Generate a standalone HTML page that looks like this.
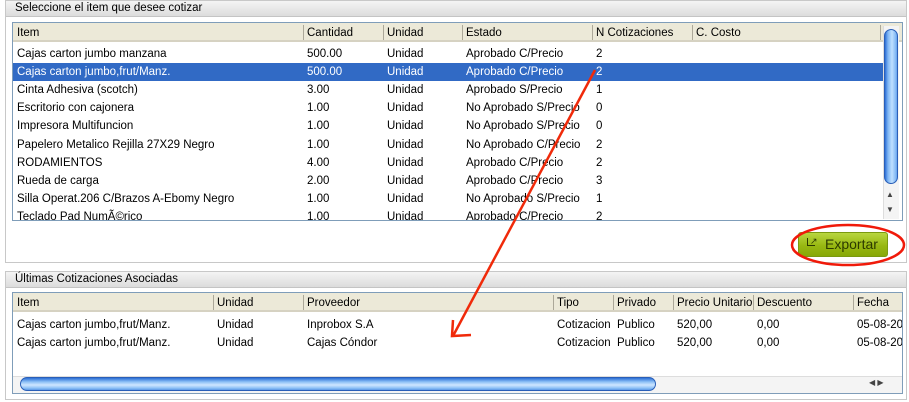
<!DOCTYPE html>
<html><head><meta charset="utf-8"><style>
*{margin:0;padding:0;box-sizing:border-box}
body{width:909px;height:402px;background:#fff;font-family:"Liberation Sans","DejaVu Sans",sans-serif;font-size:11.5px;color:#000;position:relative;overflow:hidden}
.abs{position:absolute}
.panel{position:absolute;border:1px solid #c8c8c8;background:#fff}
.ph{position:absolute;left:0;right:0;top:0;height:16px;background:linear-gradient(#f4f4f4,#dcdcdc);border-bottom:1px solid #c4c4c4;padding-left:9px;line-height:15px;font-size:11.5px}
.box{position:absolute;border:1px solid #7f9db9;background:#fff;overflow:hidden}
.hdr{position:absolute;left:0;right:0;top:0;height:19px;background:#ece9d8;border-bottom:2px solid #d6d2c2}
.hdr span{position:absolute;top:4px}
.sep{position:absolute;top:2px;width:1px;height:15px;background:#aca899}
.row{position:absolute;left:0;height:18px;line-height:18px;white-space:nowrap}
.row span{position:absolute}
.sel{background:#316ac5;color:#fff}
</style></head><body>

<div class="panel" style="left:5px;top:0;width:902px;height:263px">
  <div class="ph">Seleccione el item que desee cotizar</div>
</div>
<div class="box" style="left:12px;top:22px;width:891px;height:199px">
  <div class="hdr" style="right:0">
    <span style="left:4px">Item</span><div class="sep" style="left:290px"></div>
    <span style="left:294px">Cantidad</span><div class="sep" style="left:370px"></div>
    <span style="left:374px">Unidad</span><div class="sep" style="left:449px"></div>
    <span style="left:453px">Estado</span><div class="sep" style="left:579px"></div>
    <span style="left:583px">N Cotizaciones</span><div class="sep" style="left:679px"></div>
    <span style="left:683px">C. Costo</span><div class="sep" style="left:867px"></div>
  </div>
  <div id="r1"></div>
</div>
<div class="abs" style="left:883px;top:26px;width:16px;height:193px;background:#f4f4f4;border-left:1px solid #ddd"></div>
<div class="abs" style="left:884px;top:29px;width:14px;height:155px;border-radius:7px;background:repeating-linear-gradient(90deg,#2c6fd6 0,#7fb6f4 3px,#bfe0ff 7px,#7fb6f4 11px,#2c6fd6 14px);border:1px solid #2a5fb8"></div>
<div class="abs" style="left:886px;top:190px;font-size:8px;color:#444">▲</div>
<div class="abs" style="left:886px;top:205px;font-size:8px;color:#444">▼</div>

<div class="abs" style="left:798px;top:232px;width:90px;height:25px;border-radius:3px;background:linear-gradient(#b8d640,#98b812 55%,#87a808);border:1px solid #7a9a10;font-size:14px;line-height:23px;color:#2c3a00;padding-left:26px">Exportar</div>
<div class="abs" style="left:807px;top:238px;width:8px;height:8px;border:1px solid #2c3a00;border-top:none;border-right:none"></div>
<div class="abs" style="left:810px;top:236px;font-size:9px;color:#2c3a00">↗</div>

<div class="panel" style="left:5px;top:271px;width:902px;height:129px">
  <div class="ph">Últimas Cotizaciones Asociadas</div>
</div>
<div class="box" style="left:12px;top:292px;width:891px;height:102px">
  <div class="hdr">
    <span style="left:4px">Item</span><div class="sep" style="left:200px"></div>
    <span style="left:204px">Unidad</span><div class="sep" style="left:290px"></div>
    <span style="left:294px">Proveedor</span><div class="sep" style="left:540px"></div>
    <span style="left:544px">Tipo</span><div class="sep" style="left:600px"></div>
    <span style="left:604px">Privado</span><div class="sep" style="left:660px"></div>
    <span style="left:664px">Precio Unitario</span><div class="sep" style="left:740px"></div>
    <span style="left:744px">Descuento</span><div class="sep" style="left:840px"></div>
    <span style="left:844px">Fecha</span>
  </div>
  <div class="row" style="top:23px;width:891px"><span style="left:4px">Cajas carton jumbo,frut/Manz.</span><span style="left:204px">Unidad</span><span style="left:294px">Inprobox S.A</span><span style="left:544px">Cotizacion</span><span style="left:604px">Publico</span><span style="left:664px">520,00</span><span style="left:744px">0,00</span><span style="left:844px">05-08-20</span></div>
  <div class="row" style="top:41px;width:891px"><span style="left:4px">Cajas carton jumbo,frut/Manz.</span><span style="left:204px">Unidad</span><span style="left:294px">Cajas Cóndor</span><span style="left:544px">Cotizacion</span><span style="left:604px">Publico</span><span style="left:664px">520,00</span><span style="left:744px">0,00</span><span style="left:844px">05-08-20</span></div>
  <div class="abs" style="left:0;top:83px;width:891px;height:17px;background:#f4f4f4;border-top:1px solid #ddd"></div>
  <div class="abs" style="left:7px;top:84px;width:636px;height:14px;border-radius:7px;background:repeating-linear-gradient(180deg,#2c6fd6 0,#8fc2f7 4px,#cfe6ff 7px,#8fc2f7 10px,#2c6fd6 14px);border:1px solid #2a5fb8"></div>
  <div class="abs" style="left:856px;top:85px;font-size:8px;color:#444">◀ ▶</div>
</div>

<script>
var d=[["Cajas carton jumbo manzana","500.00","Unidad","Aprobado C/Precio","2"],
["Cajas carton jumbo,frut/Manz.","500.00","Unidad","Aprobado C/Precio","2"],
["Cinta Adhesiva (scotch)","3.00","Unidad","Aprobado S/Precio","1"],
["Escritorio con cajonera","1.00","Unidad","No Aprobado S/Precio","0"],
["Impresora Multifuncion","1.00","Unidad","No Aprobado S/Precio","0"],
["Papelero Metalico Rejilla 27X29 Negro","1.00","Unidad","No Aprobado C/Precio","2"],
["RODAMIENTOS","4.00","Unidad","Aprobado C/Precio","2"],
["Rueda de carga","2.00","Unidad","Aprobado C/Precio","3"],
["Silla Operat.206 C/Brazos A-Ebomy Negro","1.00","Unidad","No Aprobado S/Precio","1"],
["Teclado Pad NumÃ©rico","1.00","Unidad","Aprobado C/Precio","2"]];
var h="";d.forEach(function(r,i){h+='<div class="row'+(i==1?' sel':'')+'" style="top:'+(22+i*18.1)+'px;width:870px"><span style="left:4px">'+r[0]+'</span><span style="left:294px">'+r[1]+'</span><span style="left:374px">'+r[2]+'</span><span style="left:453px">'+r[3]+'</span><span style="left:583px">'+r[4]+'</span></div>'});
document.getElementById("r1").outerHTML=h;
</script>

<svg class="abs" style="left:0;top:0" width="909" height="402">
  <ellipse cx="848" cy="245" rx="56" ry="20" fill="none" stroke="#f01a0a" stroke-width="2.5"/>
  <line x1="595" y1="70" x2="453" y2="336" stroke="#f02a0a" stroke-width="2.5"/>
  <polyline points="453,320 452,336 471,335" fill="none" stroke="#f02a0a" stroke-width="2.5"/>
</svg>
</body></html>
